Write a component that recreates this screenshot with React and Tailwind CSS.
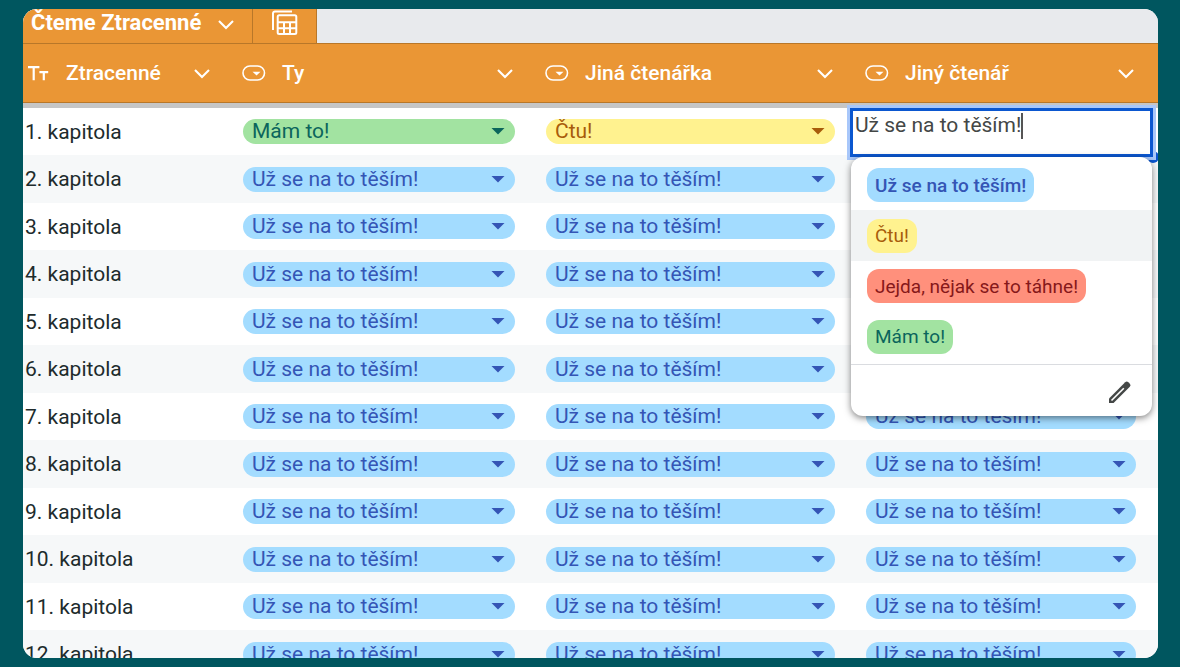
import { useState } from "react";

const OPTIONS = ["Už se na to těším!", "Čtu!", "Jejda, nějak se to táhne!", "Mám to!"];

const CHIP_COLORS = {
  "Už se na to těším!": "bg-[#a3dcff] text-[#3455b5]",
  "Čtu!": "bg-[#fff28f] text-[#a85c0b]",
  "Jejda, nějak se to táhne!": "bg-[#ff907c] text-[#86181a]",
  "Mám to!": "bg-[#a2e3a1] text-[#0b655c]",
};

const READERS = ["Ty", "Jiná čtenářka", "Jiný čtenář"];

const ROWS = Array.from({ length: 12 }, (_, i) => ({
  chapter: `${i + 1}. kapitola`,
  values: i === 0 ? ["Mám to!", "Čtu!", OPTIONS[0]] : [OPTIONS[0], OPTIONS[0], OPTIONS[0]],
}));

const Chevron = () => (
  <svg className="w-4 h-4" viewBox="0 0 16 16" fill="none" stroke="currentColor" strokeWidth="2.1">
    <path d="M1 5 8 12 15 5" />
  </svg>
);

const DropdownIcon = () => (
  <svg className="w-6 h-4 shrink-0" viewBox="0 0 24 16" fill="none" stroke="currentColor" strokeWidth="1.6">
    <rect x="1" y="1" width="21.5" height="14" rx="7" />
    <path d="M10.5 6.700h8L14.500 10.400z" fill="currentColor" stroke="none" />
  </svg>
);

const TextIcon = () => (
  <svg className="w-[22px] h-4 shrink-0" viewBox="0 0 22 16" fill="currentColor">
    <path d="M0 1h11.400v2.200H6.800V15.300H4.600V3.200H0zM11.400 6h8.800v2.200h-3.300v7.100h-2.200V8.200h-3.300z" />
  </svg>
);

const SheetIcon = () => (
  <svg className="w-7 h-7" viewBox="0 0 28 28" fill="none" stroke="currentColor" strokeWidth="2">
    <path d="M2 21V4.400a2 2 0 0 1 2-2h17" />
    <rect x="6.700" y="6.300" width="18.600" height="18.700" rx="1.500" />
    <path d="M6.700 13.300h18.600M6.700 19.200h18.600M13 13v12M19 13v12" />
  </svg>
);

const PencilIcon = () => (
  <svg className="w-6 h-6" viewBox="0 0 24 24" fill="currentColor">
    <path d="M1 23v-4.600L17.200 2.200a2.200 2.200 0 0 1 3.100 0l1.500 1.500a2.200 2.200 0 0 1 0 3.100L5.600 23z" />
    <path d="M3.500 20.500 15.800 8.200" stroke="white" strokeWidth="1.6" />
  </svg>
);

const Chip = ({ label, value, onChange }) => (
  <div className={`relative h-[25px] rounded-full ${CHIP_COLORS[value]}`}>
    <select
      aria-label={label}
      value={value}
      onChange={(e) => onChange(e.target.value)}
      className="block w-full h-full appearance-none bg-transparent pl-[9px] pr-8 leading-[25px] outline-none cursor-pointer"
    >
      {OPTIONS.map((option) => (
        <option key={option}>{option}</option>
      ))}
    </select>
    <svg className="absolute right-2.5 top-2 w-3.5 h-2 pointer-events-none" viewBox="0 0 14 8" fill="currentColor">
      <path d="M.5 1h13L7 7.500z" />
    </svg>
  </div>
);

const CellEditor = ({ value, onChange }) => (
  <div className="absolute left-0 right-[5px] top-0 z-10 -ml-px">
    <span className="absolute -right-1.5 top-[43px] w-3 h-3 rounded-full bg-[#0b57d0]" />
    <div className="relative h-[49px] border-3 border-[#0b57d0] bg-white ring-3 ring-[#a8c7fa] flex items-start pl-0.5 pt-0.5">
      <input
        aria-label="Jiný čtenář, 1. kapitola"
        value={value}
        onChange={(e) => onChange(e.target.value)}
        className="field-sizing-content h-[26px] border-r-2 border-[#555] text-[#444746] outline-none"
      />
    </div>
    <div className="relative ml-px mr-px rounded-xl bg-white text-[19px] shadow-[0_2px_7px_rgba(0,0,0,0.5)]">
      <ul role="listbox" aria-label="Možnosti" className="pt-[3px] pb-0.5">
        {OPTIONS.map((option, i) => (
          <li key={option} role="option" aria-selected={option === value} className="h-[50px] even:h-[51px]">
            <button
              onClick={() => onChange(option)}
              className={`flex w-full h-full items-center pl-4 ${i === 1 ? "bg-[#f1f3f4]" : ""}`}
            >
              <span
                className={`flex h-[34px] items-center rounded-xl px-2 pt-0.5 ${CHIP_COLORS[option]} ${i === 0 ? "font-medium" : ""}`}
              >
                {option}
              </span>
            </button>
          </li>
        ))}
      </ul>
      <div className="flex h-[52px] items-center justify-end border-t border-[#dadce0] pr-5 pt-0.5 text-[#444746]">
        <button aria-label="Upravit">
          <PencilIcon />
        </button>
      </div>
    </div>
  </div>
);

const App = () => {
  const [rows, setRows] = useState(ROWS);

  const setValue = (row, col, value) => {
    setRows(rows.map((r, i) => (i === row ? { ...r, values: r.values.map((v, j) => (j === col ? value : v)) } : r)));
  };

  return (
    <div className="h-screen bg-[#00565f] pt-[9px] pb-[9px] pl-[23px] pr-[22px] font-[Roboto,sans-serif] text-[21px]">
      <div className="h-full overflow-hidden rounded-[14px] bg-white">
        <div className="flex h-[34px] bg-[#e8eaed] text-white">
          <button className="flex w-[230px] items-center justify-between border-r border-[#b87729] bg-[#ea9635] pl-2 pr-[18px] pb-2 text-[22px] font-bold whitespace-nowrap">
            Čteme Ztracenné
            <span className="pt-1"><Chevron /></span>
          </button>
          <button aria-label="Tabulka" className="flex w-16 pl-[18px] border-r border-[#b87729] bg-[#ea9635]">
            <SheetIcon />
          </button>
        </div>

        <table className="w-full table-fixed border-separate border-spacing-0">
          <colgroup>
            <col className="w-[205px]" />
            <col className="w-[303px]" />
            <col className="w-[320px]" />
            <col />
          </colgroup>
          <thead className="bg-[#ea9635] text-white">
            <tr className="h-[60px]">
              <th className="border-y border-[#b87729] pl-[5px] pr-[18px] font-medium">
                <div className="flex items-center">
                  <TextIcon />
                  <span className="ml-4 pt-0.5">Ztracenné</span>
                  <button aria-label="Nabídka sloupce Ztracenné" className="ml-auto"><Chevron /></button>
                </div>
              </th>
              {READERS.map((reader) => (
                <th key={reader} className="border-y border-[#b87729] pl-3.5 pr-[18px] last:pr-6 font-medium">
                  <div className="flex items-center">
                    <DropdownIcon />
                    <span className="ml-4 pt-0.5">{reader}</span>
                    <button aria-label={`Nabídka sloupce ${reader}`} className="ml-auto"><Chevron /></button>
                  </div>
                </th>
              ))}
            </tr>
            {/* frozen rows divider */}
            <tr aria-hidden="true">
              <td colSpan={4} className="h-[5px] p-0 bg-[#c6c6c6]"></td>
            </tr>
          </thead>
          <tbody>
            {rows.map((row, i) => (
              <tr key={row.chapter} className="h-[47px] even:h-12 even:bg-[#f6f8f9]">
                <td className="pl-0.5 pt-0.5 text-[#202b2c]">{row.chapter}</td>
                {row.values.map((value, j) => (
                  <td key={j} className="relative pl-[15px] pr-4 last:pr-[22px]">
                    {i === 0 && j === 2 ? (
                      <CellEditor value={value} onChange={(v) => setValue(i, j, v)} />
                    ) : (
                      <Chip label={`${READERS[j]}, ${row.chapter}`} value={value} onChange={(v) => setValue(i, j, v)} />
                    )}
                  </td>
                ))}
              </tr>
            ))}
          </tbody>
        </table>
      </div>
    </div>
  );
};

export default App;
